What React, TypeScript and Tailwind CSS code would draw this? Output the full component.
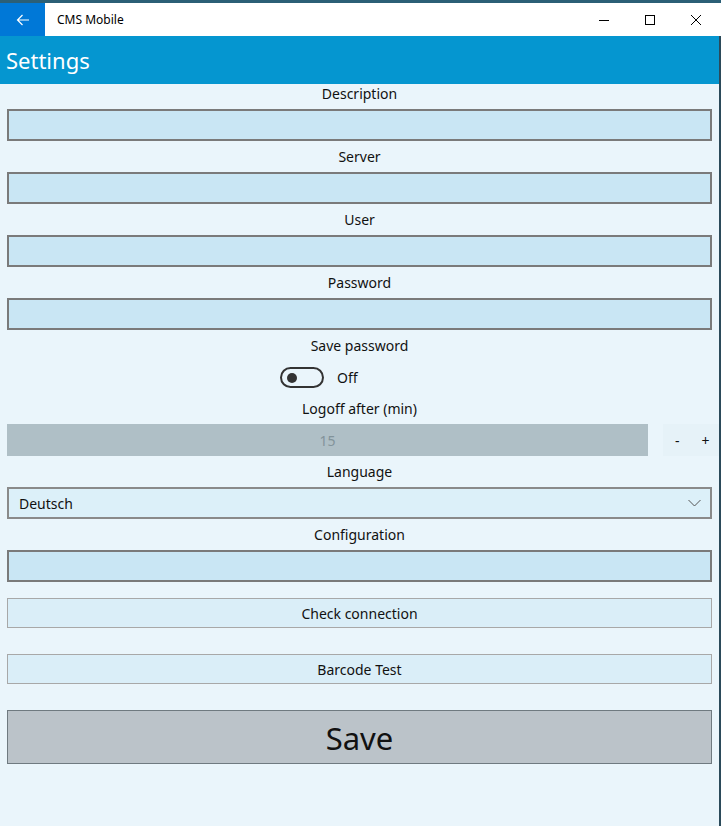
const font = { fontFamily: '"Segoe UI", "Noto Sans", "Open Sans", sans-serif' };

function Label({ children }: { children: string }) {
  return <div className="h-[25px] text-center text-[14px] leading-[20px] text-[#111]">{children}</div>;
}

function TextField({ label }: { label: string }) {
  return (
    <div className="mb-[6px]">
      <Label>{label}</Label>
      <div className="mx-[7px] h-[32px] border-2 border-[#7a7a7a] bg-[#c9e6f4]" />
    </div>
  );
}

function PlainButton({ children }: { children: string }) {
  return (
    <div className="mx-[7px] flex h-[30px] items-center justify-center border border-[#a8a8a8] bg-[#daeef8] text-[14px] text-[#111]">
      {children}
    </div>
  );
}

export default function App() {
  return (
    <div className="flex h-[826px] w-[721px] flex-col bg-[#eaf5fb]" style={font}>
      {/* title bar */}
      <div className="h-[3px] bg-[#2b5f76]" />
      <div className="flex h-[33px] items-center bg-white pr-[2px]">
        <div className="flex h-full w-[45px] items-center justify-center bg-[#0078d7]">
          <svg width="14" height="12" viewBox="0 0 14 12" fill="none" stroke="white" strokeWidth="1.2">
            <path d="M13 6H1.5M6.5 1L1.5 6l5 5" />
          </svg>
        </div>
        <span className="ml-[12px] text-[12px] text-black">CMS Mobile</span>
        <div className="ml-auto flex h-full items-center">
          <div className="flex h-full w-[46px] items-center justify-center">
            <svg width="10" height="10" viewBox="0 0 10 10" stroke="black" strokeWidth="1">
              <path d="M0 5.5h10" />
            </svg>
          </div>
          <div className="flex h-full w-[46px] items-center justify-center">
            <svg width="10" height="10" viewBox="0 0 10 10" fill="none" stroke="black" strokeWidth="1">
              <rect x="0.5" y="0.5" width="9" height="9" />
            </svg>
          </div>
          <div className="flex h-full w-[46px] items-center justify-center">
            <svg width="10" height="10" viewBox="0 0 10 10" stroke="black" strokeWidth="1">
              <path d="M0 0l10 10M10 0L0 10" />
            </svg>
          </div>
        </div>
      </div>

      <div className="flex flex-1 border-r-2 border-[#2b4a5a]">
        <div className="flex flex-1 flex-col">
          {/* page header */}
          <div className="flex h-[48px] items-center bg-[#0596d0] pl-[6px]">
            <span className="text-[22px] leading-none text-white">Settings</span>
          </div>

          <TextField label="Description" />
          <TextField label="Server" />
          <TextField label="User" />
          <TextField label="Password" />

          <Label>Save password</Label>
          <div className="flex h-[38px] pt-[6px]">
            <div className="ml-[280px] flex items-start gap-[13px]">
              <div className="flex h-[21px] w-[44px] items-center rounded-full border-2 border-[#333] pl-[5px]">
                <div className="h-[10px] w-[10px] rounded-full bg-[#333]" />
              </div>
              <span className="text-[14px] leading-[21px] text-[#111]">Off</span>
            </div>
          </div>

          <Label>Logoff after (min)</Label>
          <div className="mb-[6px] flex h-[32px] items-center pl-[7px]">
            <div className="flex h-full w-[641px] items-center justify-center bg-[#afbfc6] text-[14px] text-[#82939a]">
              15
            </div>
            <div className="ml-[15px] flex h-full flex-1 items-center bg-[#e6f2f8] text-[14px] text-[#111]">
              <span className="ml-[12px]">-</span>
              <span className="ml-[22px]">+</span>
            </div>
          </div>

          <Label>Language</Label>
          <div className="mx-[7px] mb-[6px] flex h-[32px] items-center border-2 border-[#8a8a8a] bg-[#dcf0f9] pl-[10px] pr-[9px] text-[14px] text-[#111]">
            <span>Deutsch</span>
            <svg className="ml-auto" width="13" height="8" viewBox="0 0 13 8" fill="none" stroke="#555" strokeWidth="1">
              <path d="M0.5 1l6 6 6-6" />
            </svg>
          </div>

          <TextField label="Configuration" />

          <div className="mt-[10px]">
            <PlainButton>Check connection</PlainButton>
          </div>
          <div className="mt-[26px]">
            <PlainButton>Barcode Test</PlainButton>
          </div>

          <div className="mx-[7px] mt-[26px] flex h-[54px] items-center justify-center border border-[#6f7a80] bg-[#bbc3c9] pt-[2px] text-[31px] text-[#111]">
            Save
          </div>
        </div>
      </div>
    </div>
  );
}
